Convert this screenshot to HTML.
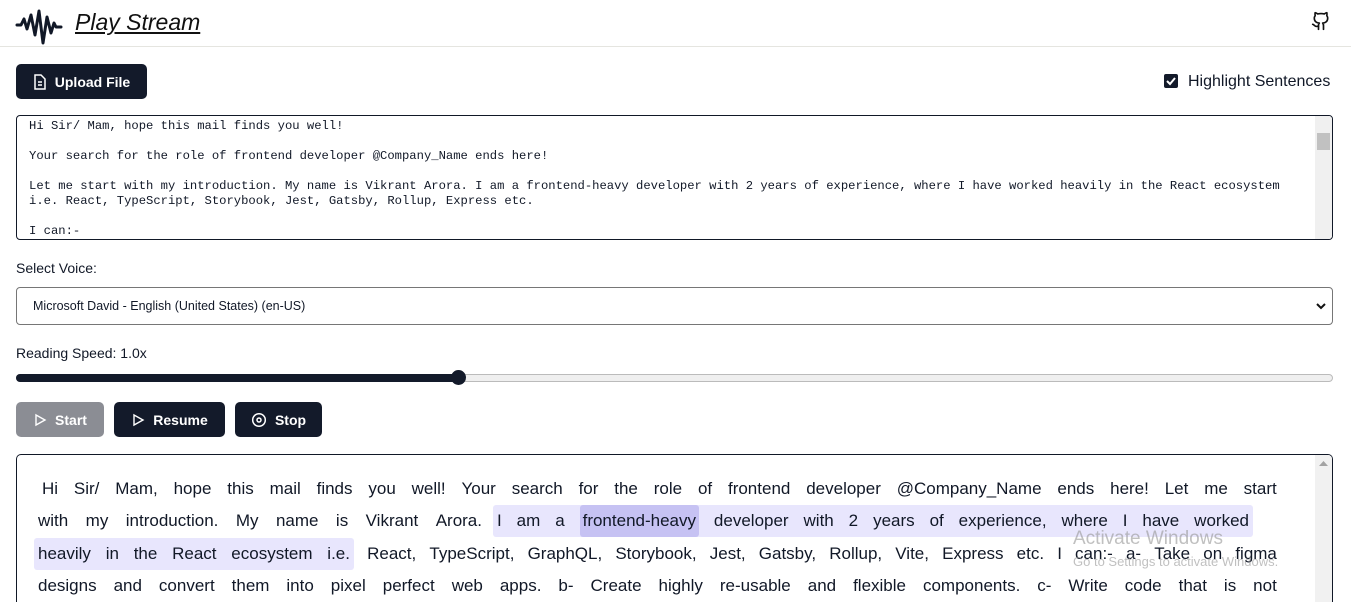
<!DOCTYPE html>
<html><head><meta charset="utf-8"><style>
*{box-sizing:border-box}
html,body{margin:0;width:1351px;height:602px;overflow:hidden;background:#fff;font-family:"Liberation Sans",sans-serif;color:#111827}
.hdr{height:47px;border-bottom:1px solid #e5e5e0;position:relative}
.logo{position:absolute;left:15px;top:3px}
.title{position:absolute;left:75px;top:9px;font-size:23px;font-style:italic;text-decoration:underline;color:#111}
.gh{position:absolute;left:1311px;top:10px}
.btn{position:absolute;height:35px;border-radius:5px;background:#131a2a;color:#fff;font-weight:bold;font-size:14px;display:flex;align-items:center;justify-content:center;gap:8px}
.ta{position:absolute;left:16px;top:115px;width:1317px;height:125px;border:1px solid #111827;border-radius:4px;font-family:"Liberation Mono",monospace;font-size:12.2px;line-height:15px;padding:3px 12px;white-space:pre;overflow:hidden}
.sb{position:absolute;right:0;top:0;width:17px;height:100%;background:#f0f0f0}
.lbl{position:absolute;left:16px;font-size:14px}
.sel{position:absolute;left:16px;top:287px;width:1317px;height:38px;border:1px solid #767676;border-radius:4px;font-size:12.5px;padding:11px 16px}
.out{position:absolute;left:16px;top:454px;width:1317px;height:148px;border:1px solid #111827;border-bottom:none;border-radius:5px 5px 0 0;padding:18px 55px 0 21px;font-size:17px;overflow:hidden}
.ln{height:32.3px;line-height:32px;white-space:nowrap;display:flex;justify-content:space-between;align-items:center}
.hl{background:#e8e6fd;border-radius:3px;padding:0 4px}
.wd{background:#c6c2f3;border-radius:3px;padding:0 3px}
</style></head><body>
<div class="hdr">
<svg class="logo" width="48" height="42" viewBox="0 0 48 42" fill="none" stroke="#111827" stroke-width="3" stroke-linejoin="round" stroke-linecap="round"><path d="M2 22h4l3-6 3 10 4-14 4 20 4-24 4 32 4-26 4 16 3-10 2 4h5"/></svg>
<div class="title">Play Stream</div>
<svg class="gh" width="20" height="22" viewBox="0 0 24 24" fill="none" stroke="#111" stroke-width="2" stroke-linecap="round" stroke-linejoin="round"><path d="M15 22v-4a4.8 4.8 0 0 0-1-3.5c3 0 6-2 6-5.5.08-1.25-.27-2.480-1-3.5.28-1.15.28-2.35 0-3.5 0 0-1 0-3 1.5-2.64-.5-5.36-.5-8 0C6 2 5 2 5 2c-.3 1.15-.3 2.35 0 3.5A5.4 5.4 0 0 0 4 9c0 3.5 3 5.5 6 5.5-.39.49-.68 1.05-.85 1.65-.17.6-.22 1.23-.15 1.850v4"/><path d="M9 18c-4.51 2-5-2-7-2"/></svg>
</div>
<div class="btn" style="left:16px;top:64px;width:131px"><svg width="14" height="16" viewBox="0 0 14 16" fill="none" stroke="#fff" stroke-width="1.5"><path d="M2 1h6l4 4v10H2z M5 8h4 M5 11h4"/></svg>Upload File</div>
<div style="position:absolute;left:1164px;top:74px;width:14px;height:14px;background:#131a2a;border-radius:2px"><svg width="14" height="14" viewBox="0 0 14 14"><path d="M3 7l3 3 5-6" stroke="#fff" stroke-width="2" fill="none"/></svg></div>
<div style="position:absolute;left:1188px;top:73px;font-size:16px">Highlight Sentences</div>
<div class="ta">Hi Sir/ Mam, hope this mail finds you well!

Your search for the role of frontend developer @Company_Name ends here!

Let me start with my introduction. My name is Vikrant Arora. I am a frontend-heavy developer with 2 years of experience, where I have worked heavily in the React ecosystem
i.e. React, TypeScript, Storybook, Jest, Gatsby, Rollup, Express etc.

I can:-<div class="sb"><div style="position:absolute;top:17px;left:2px;width:13px;height:17px;background:#c1c1c1"></div></div></div>
<div class="lbl" style="top:260px">Select Voice:</div>
<div class="sel">Microsoft David - English (United States) (en-US)<svg style="position:absolute;right:6px;top:14px" width="10" height="8" viewBox="0 0 10 8"><path d="M1 2l4 4 4-4" stroke="#111" stroke-width="2" fill="none"/></svg></div>
<div class="lbl" style="top:345px">Reading Speed: 1.0x</div>
<div style="position:absolute;left:16px;top:374px;width:1317px;height:8px;border:1px solid #bbb;border-radius:4px;background:#efefef"></div>
<div style="position:absolute;left:16px;top:374px;width:442px;height:8px;border-radius:4px;background:#131a2a"></div>
<div style="position:absolute;left:451px;top:370px;width:15px;height:15px;border-radius:50%;background:#131a2a"></div>
<div class="btn" style="left:16px;top:402px;width:88px;background:#8b8d94"><svg width="14" height="14" viewBox="0 0 14 14"><path d="M3 2l9 5-9 5z" stroke="#fff" stroke-width="1.4" fill="none"/></svg>Start</div>
<div class="btn" style="left:114px;top:402px;width:111px"><svg width="14" height="14" viewBox="0 0 14 14"><path d="M3 2l9 5-9 5z" stroke="#fff" stroke-width="1.4" fill="none"/></svg>Resume</div>
<div class="btn" style="left:235px;top:402px;width:87px"><svg width="16" height="16" viewBox="0 0 16 16"><circle cx="8" cy="8" r="6.3" stroke="#fff" stroke-width="1.5" fill="none"/><circle cx="8" cy="8" r="2" stroke="#fff" stroke-width="1.5" fill="none"/></svg>Stop</div>
<div class="out">
<div style="position:absolute;right:0;top:0;width:17px;height:100%;background:#f1f1f1"><svg style="position:absolute;left:4px;top:5px" width="9" height="6"><path d="M0 6l4.5-5 4.5 5z" fill="#a3a3a3"/></svg></div>
<div class="ln" style="padding-left:4px"><span>Hi</span><span>Sir/</span><span>Mam,</span><span>hope</span><span>this</span><span>mail</span><span>finds</span><span>you</span><span>well!</span><span>Your</span><span>search</span><span>for</span><span>the</span><span>role</span><span>of</span><span>frontend</span><span>developer</span><span>@Company_Name</span><span>ends</span><span>here!</span><span>Let</span><span>me</span><span>start</span></div>
<div class="ln" style="padding-right:24px"><span style="display:flex;justify-content:space-between;width:444px"><span>with</span><span>my</span><span>introduction.</span><span>My</span><span>name</span><span>is</span><span>Vikrant</span><span>Arora.</span></span><span class="hl" style="display:flex;justify-content:space-between;width:760px"><span>I</span><span>am</span><span>a</span><span class="wd">frontend-heavy</span><span>developer</span><span>with</span><span>2</span><span>years</span><span>of</span><span>experience,</span><span>where</span><span>I</span><span>have</span><span>worked</span></span></div>
<div class="ln"><span class="hl" style="display:flex;justify-content:space-between;width:320px;margin-left:-4px"><span>heavily</span><span>in</span><span>the</span><span>React</span><span>ecosystem</span><span>i.e.</span></span><span>React,</span><span>TypeScript,</span><span>GraphQL,</span><span>Storybook,</span><span>Jest,</span><span>Gatsby,</span><span>Rollup,</span><span>Vite,</span><span>Express</span><span>etc.</span><span>I</span><span>can:-</span><span>a-</span><span>Take</span><span>on</span><span>figma</span></div>
<div class="ln"><span>designs</span><span>and</span><span>convert</span><span>them</span><span>into</span><span>pixel</span><span>perfect</span><span>web</span><span>apps.</span><span>b-</span><span>Create</span><span>highly</span><span>re-usable</span><span>and</span><span>flexible</span><span>components.</span><span>c-</span><span>Write</span><span>code</span><span>that</span><span>is</span><span>not</span></div>
</div>
<div style="position:absolute;left:1073px;top:528px;color:rgba(150,150,150,.6);font-size:19px">Activate Windows</div>
<div style="position:absolute;left:1073px;top:554px;color:rgba(150,150,150,.6);font-size:13px">Go to Settings to activate Windows.</div>
</body></html>
